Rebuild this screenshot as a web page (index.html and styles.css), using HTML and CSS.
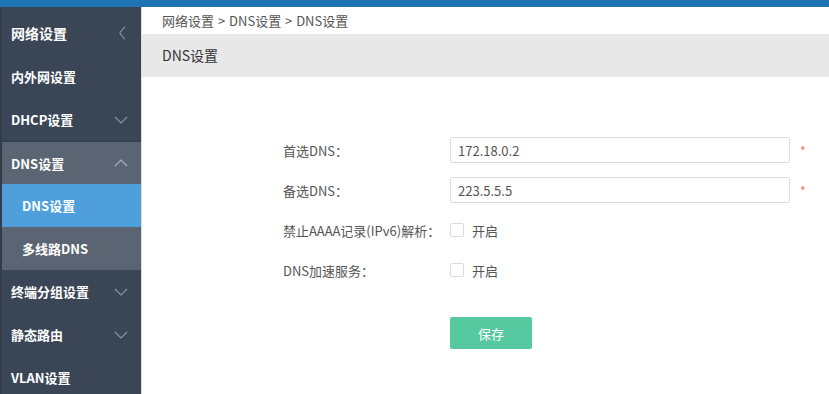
FILE: index.html
```html
<!DOCTYPE html>
<html lang="zh-CN">
<head>
  <meta charset="UTF-8" />
  <title>DNS设置</title>
  <link rel="stylesheet" href="styles.css">
</head>
<body>
  <div class="topbar"></div>
  <div class="layout">
    <aside class="sidebar">
      <div class="menu-item menu-first">网络设置
        <svg class="arrow" viewBox="0 0 10 16" width="9" height="16"><path d="M7.5 1 L2 8 L7.5 15" fill="none" stroke="#8a93a0" stroke-width="1.2"/></svg>
      </div>
      <div class="menu-item">内外网设置</div>
      <div class="menu-item">DHCP设置
        <svg class="arrow" viewBox="0 0 14 8" width="14" height="8"><path d="M1 1 L7 7 L13 1" fill="none" stroke="#8a93a0" stroke-width="1.2"/></svg>
      </div>
      <div class="menu-item menu-open">DNS设置
        <svg class="arrow" viewBox="0 0 14 8" width="14" height="8"><path d="M1 7 L7 1 L13 7" fill="none" stroke="#a8afb8" stroke-width="1.2"/></svg>
      </div>
      <div class="menu-item sub active">DNS设置</div>
      <div class="menu-item sub">多线路DNS</div>
      <div class="menu-item">终端分组设置
        <svg class="arrow" viewBox="0 0 14 8" width="14" height="8"><path d="M1 1 L7 7 L13 1" fill="none" stroke="#8a93a0" stroke-width="1.2"/></svg>
      </div>
      <div class="menu-item">静态路由
        <svg class="arrow" viewBox="0 0 14 8" width="14" height="8"><path d="M1 1 L7 7 L13 1" fill="none" stroke="#8a93a0" stroke-width="1.2"/></svg>
      </div>
      <div class="menu-item">VLAN设置</div>
    </aside>
    <main class="main">
      <div class="breadcrumb">网络设置 &gt; DNS设置 &gt; DNS设置</div>
      <div class="page-title">DNS设置</div>
      <form class="dns-form">
        <div class="form-row">
          <label class="form-label">首选DNS：</label>
          <input class="text-input" type="text" value="172.18.0.2">
          <span class="required">*</span>
        </div>
        <div class="form-row">
          <label class="form-label">备选DNS：</label>
          <input class="text-input" type="text" value="223.5.5.5">
          <span class="required">*</span>
        </div>
        <div class="form-row">
          <label class="form-label">禁止AAAA记录(IPv6)解析：</label>
          <span class="checkbox"></span>
          <span class="check-text">开启</span>
        </div>
        <div class="form-row">
          <label class="form-label">DNS加速服务：</label>
          <span class="checkbox"></span>
          <span class="check-text">开启</span>
        </div>
        <div class="form-actions">
          <button type="button" class="save-btn">保存</button>
        </div>
      </form>
    </main>
  </div>
</body>
</html>
```

FILE: styles.css
```css
body {
  margin: 0;
  font-family: "Noto Sans CJK SC", "Noto Sans", sans-serif;
  font-size: 13px;
  color: #555;
  background: #fff;
  overflow: hidden;
}

.topbar {
  height: 7px;
  background: #1f74b4;
}

.layout {
  display: flex;
  height: 387px;
}

.sidebar {
  width: 141px;
  background: #3a4656;
  border-left: 2px solid #323c4a;
  box-sizing: border-box;
  flex-shrink: 0;
}

.menu-item {
  height: 43px;
  display: flex;
  align-items: center;
  justify-content: space-between;
  padding: 0 13px 0 9px;
  color: #fff;
  font-weight: bold;
  font-size: 13px;
}

.menu-first {
  height: 48px;
  font-size: 14px;
  padding-top: 4px;
  padding-right: 14px;
  box-sizing: border-box;
}

.menu-open {
  background: #5a6472;
  border-top: 1px solid #333e4c;
  height: 43px;
  box-sizing: border-box;
}

.sub {
  padding-left: 20px;
  background: #5a6472;
}

.sub.active {
  background: #4e9fdb;
}

.arrow {
  display: block;
}

.main {
  flex: 1;
  border-left: 1px solid #dcdcdc;
}

.breadcrumb {
  height: 27px;
  line-height: 27px;
  padding-left: 20px;
  color: #555;
  word-spacing: 1px;
}

.page-title {
  height: 43px;
  line-height: 43px;
  background: #e8e8e8;
  padding-left: 20px;
  font-size: 14px;
  color: #333;
}

.dns-form {
  padding: 53px 0 0 141px;
}

.form-row {
  display: flex;
  align-items: center;
  height: 40px;
}

.form-label {
  width: 167px;
  color: #555;
}

.text-input {
  width: 340px;
  height: 26px;
  box-sizing: border-box;
  border: 1px solid #dcdcdc;
  border-radius: 2px;
  padding: 0 7px;
  font-family: inherit;
  font-size: 13px;
  color: #555;
  outline: none;
}

.required {
  color: #f26b6b;
  margin-left: 10px;
  font-size: 12px;
}

.checkbox {
  width: 14px;
  height: 14px;
  box-sizing: border-box;
  border: 1px solid #dcdcdc;
  border-radius: 2px;
}

.check-text {
  margin-left: 8px;
  color: #555;
}

.form-actions {
  padding: 27px 0 0 167px;
}

.save-btn {
  width: 82px;
  height: 32px;
  background: #57c9a0;
  border: none;
  border-radius: 2px;
  color: #fff;
  font-family: inherit;
  font-size: 13px;
}
```
